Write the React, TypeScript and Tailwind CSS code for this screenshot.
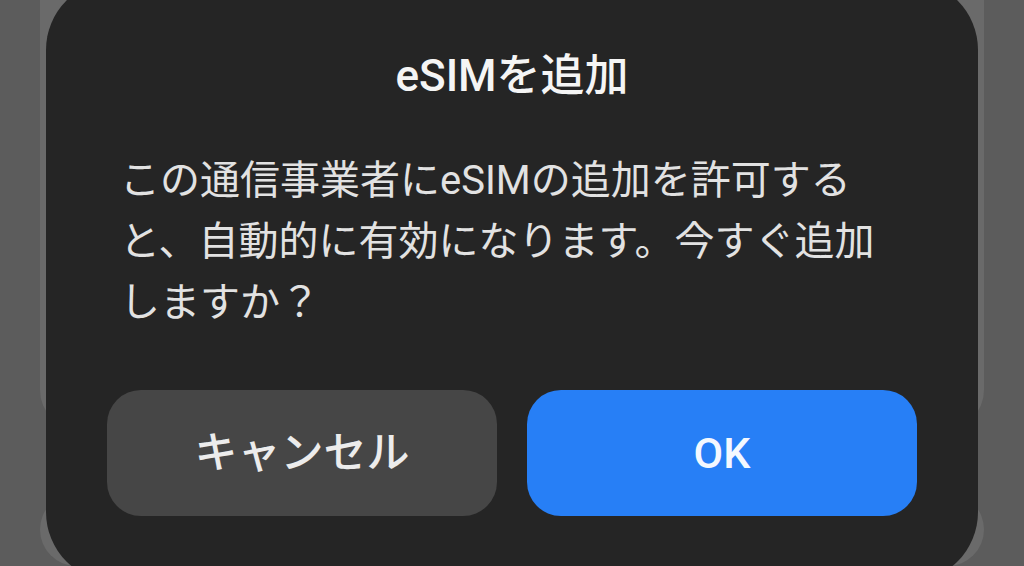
export default function App() {
  const font = { fontFamily: 'Roboto, "Noto Sans CJK JP", sans-serif' };

  return (
    <div
      className="relative h-[566px] w-[1024px] overflow-hidden bg-[#5c5c5c]"
      style={font}
    >
      {/* background cards behind the dim overlay */}
      <div className="flex h-full flex-col px-[40px]">
        <div className="-mt-[40px] h-[517px] rounded-[40px] bg-[#6a6a6a]" />
        <div className="mt-[63px] h-[80px] rounded-[40px] bg-[#6a6a6a]" />
      </div>

      {/* dialog */}
      <div className="absolute inset-x-0 top-[-20px] flex justify-center">
        <div className="w-[932px] rounded-[70px] bg-[#252525] px-[61px] pb-[66px] pt-[66px]">
          <h2 className="text-center text-[44px] font-medium leading-[60px] text-[#f5f5f5]">
            eSIMを追加
          </h2>

          <p className="mt-[44px] px-[13px] text-[40px] leading-[61px] text-[#e2e2e2]">
            この通信事業者にeSIMの追加を許可する
            <br />
            と、自動的に有効になります。今すぐ追加
            <br />
            しますか？
          </p>

          <div className="mt-[57px] flex gap-[30px]">
            <button className="flex h-[126px] flex-1 items-center justify-center rounded-[34px] bg-[#464646] text-[43px] font-medium text-[#ececec]">
              キャンセル
            </button>
            <button className="flex h-[126px] flex-1 items-center justify-center rounded-[34px] bg-[#277ff6] text-[43px] font-medium text-[#f4f8ff]">
              OK
            </button>
          </div>
        </div>
      </div>
    </div>
  );
}
